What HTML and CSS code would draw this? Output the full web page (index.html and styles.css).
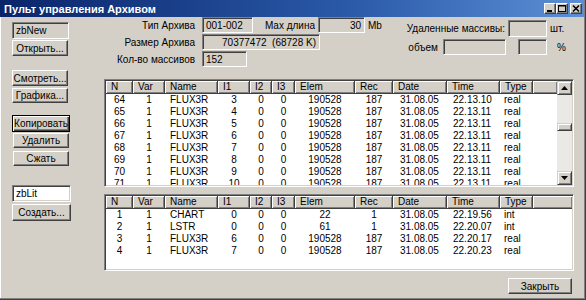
FILE: index.html
```html
<!DOCTYPE html>
<html>
<head>
<meta charset="utf-8">
<link rel="stylesheet" href="styles.css">
</head>
<body>
<div class="window">
  <div class="titlebar">
    <span class="title">Пульт управления Архивом</span>
    <div class="caption-btns">
      <span class="cbtn"><svg width="10" height="9" viewBox="0 0 10 9"><rect x="2" y="6" width="5" height="2" fill="#000"/></svg></span>
      <span class="cbtn"><svg width="10" height="9" viewBox="0 0 10 9"><rect x="1.5" y="1.5" width="7" height="6" fill="none" stroke="#000"/><rect x="1" y="1" width="8" height="1.5" fill="#000"/></svg></span>
      <span class="cbtn cclose"><svg width="10" height="9" viewBox="0 0 10 9"><path d="M2 1.5 L8 7.5 M8 1.5 L2 7.5" stroke="#000" stroke-width="1.6"/></svg></span>
    </div>
  </div>
  <div class="content">
    <div class="side">
      <div class="field gray s-new">zbNew</div>
      <div class="btn s-open">Открыть...</div>
      <div class="btn s-view">Смотреть...</div>
      <div class="btn s-graph">Графика...</div>
      <div class="btn focus s-copy">Копировать</div>
      <div class="btn s-del">Удалить</div>
      <div class="btn s-pack">Сжать</div>
      <div class="field white s-lit">zbLit</div>
      <div class="btn s-create">Создать...</div>
    </div>
    <div class="main">
      <div class="form">
        <div class="form-left">
          <div class="frow">
            <span class="lbl lbl-main">Тип Архива</span>
            <span class="field gray f-type">001-002</span>
            <span class="lbl lbl-max">Max длина</span>
            <span class="field gray f-max">30</span>
            <span class="unit">Mb</span>
          </div>
          <div class="frow">
            <span class="lbl lbl-main">Размер Архива</span>
            <span class="field gray f-size">70377472&nbsp; (68728 K)</span>
          </div>
          <div class="frow">
            <span class="lbl lbl-main">Кол-во массивов</span>
            <span class="field gray f-count">152</span>
          </div>
        </div>
        <div class="form-right">
          <div class="rrow rrow-a">
            <span class="lbl lbl-del">Удаленные массивы:</span>
            <span class="field gray f-del"></span>
            <span class="unit">шт.</span>
          </div>
          <div class="rrow rrow-b">
            <span class="lbl lbl-vol">объем</span>
            <span class="field gray f-vol"></span>
            <span class="field gray f-pct"></span>
            <span class="unit u-pct">%</span>
          </div>
        </div>
      </div>

      <div class="list list-top">
        <div class="list-main">
          <div class="row head">
            <span>N</span><span>Var</span><span>Name</span><span>I1</span><span>I2</span><span>I3</span><span>Elem</span><span>Rec</span><span>Date</span><span>Time</span><span>Type</span><span></span>
          </div>
          <div class="row"><span class="c">64</span><span class="c">1</span><span class="l">FLUX3R</span><span class="c">3</span><span class="c">0</span><span class="c">0</span><span class="c">190528</span><span class="c">187</span><span class="l">31.08.05</span><span class="l">22.13.10</span><span class="l">real</span><span></span></div>
          <div class="row"><span class="c">65</span><span class="c">1</span><span class="l">FLUX3R</span><span class="c">4</span><span class="c">0</span><span class="c">0</span><span class="c">190528</span><span class="c">187</span><span class="l">31.08.05</span><span class="l">22.13.11</span><span class="l">real</span><span></span></div>
          <div class="row"><span class="c">66</span><span class="c">1</span><span class="l">FLUX3R</span><span class="c">5</span><span class="c">0</span><span class="c">0</span><span class="c">190528</span><span class="c">187</span><span class="l">31.08.05</span><span class="l">22.13.11</span><span class="l">real</span><span></span></div>
          <div class="row"><span class="c">67</span><span class="c">1</span><span class="l">FLUX3R</span><span class="c">6</span><span class="c">0</span><span class="c">0</span><span class="c">190528</span><span class="c">187</span><span class="l">31.08.05</span><span class="l">22.13.11</span><span class="l">real</span><span></span></div>
          <div class="row"><span class="c">68</span><span class="c">1</span><span class="l">FLUX3R</span><span class="c">7</span><span class="c">0</span><span class="c">0</span><span class="c">190528</span><span class="c">187</span><span class="l">31.08.05</span><span class="l">22.13.11</span><span class="l">real</span><span></span></div>
          <div class="row"><span class="c">69</span><span class="c">1</span><span class="l">FLUX3R</span><span class="c">8</span><span class="c">0</span><span class="c">0</span><span class="c">190528</span><span class="c">187</span><span class="l">31.08.05</span><span class="l">22.13.11</span><span class="l">real</span><span></span></div>
          <div class="row"><span class="c">70</span><span class="c">1</span><span class="l">FLUX3R</span><span class="c">9</span><span class="c">0</span><span class="c">0</span><span class="c">190528</span><span class="c">187</span><span class="l">31.08.05</span><span class="l">22.13.11</span><span class="l">real</span><span></span></div>
          <div class="row"><span class="c">71</span><span class="c">1</span><span class="l">FLUX3R</span><span class="c">10</span><span class="c">0</span><span class="c">0</span><span class="c">190528</span><span class="c">187</span><span class="l">31.08.05</span><span class="l">22.13.11</span><span class="l">real</span><span></span></div>
        </div>
        <div class="vscroll">
          <span class="sbtn"><svg width="7" height="4" viewBox="0 0 7 4"><path d="M3.5 0 L7 4 L0 4 Z" fill="#000"/></svg></span>
          <div class="track">
            <span class="thumb"></span>
          </div>
          <span class="sbtn"><svg width="7" height="4" viewBox="0 0 7 4"><path d="M0 0 L7 0 L3.5 4 Z" fill="#000"/></svg></span>
        </div>
      </div>

      <div class="list list-bottom">
        <div class="list-main">
          <div class="row head">
            <span>N</span><span>Var</span><span>Name</span><span>I1</span><span>I2</span><span>I3</span><span>Elem</span><span>Rec</span><span>Date</span><span>Time</span><span>Type</span><span></span>
          </div>
          <div class="row"><span class="c">1</span><span class="c">1</span><span class="l">CHART</span><span class="c">0</span><span class="c">0</span><span class="c">0</span><span class="c">22</span><span class="c">1</span><span class="l">31.08.05</span><span class="l">22.19.56</span><span class="l">int</span><span></span></div>
          <div class="row"><span class="c">2</span><span class="c">1</span><span class="l">LSTR</span><span class="c">0</span><span class="c">0</span><span class="c">0</span><span class="c">61</span><span class="c">1</span><span class="l">31.08.05</span><span class="l">22.20.07</span><span class="l">int</span><span></span></div>
          <div class="row"><span class="c">3</span><span class="c">1</span><span class="l">FLUX3R</span><span class="c">6</span><span class="c">0</span><span class="c">0</span><span class="c">190528</span><span class="c">187</span><span class="l">31.08.05</span><span class="l">22.20.17</span><span class="l">real</span><span></span></div>
          <div class="row"><span class="c">4</span><span class="c">1</span><span class="l">FLUX3R</span><span class="c">7</span><span class="c">0</span><span class="c">0</span><span class="c">190528</span><span class="c">187</span><span class="l">31.08.05</span><span class="l">22.20.23</span><span class="l">real</span><span></span></div>
        </div>
      </div>

      <div class="footer">
        <div class="btn b-close">Закрыть</div>
      </div>
    </div>
  </div>
</div>
</body>
</html>
```

FILE: styles.css
```css
* { box-sizing: border-box; }
html, body { margin: 0; padding: 0; background: #d4d0c8; }
body {
  font-family: "Liberation Sans", Arial, sans-serif;
  font-size: 10px;
  color: #000;
}
.window {
  width: 586px;
  height: 300px;
  background: #d4d0c8;
  border-right: 1px solid #404040;
  border-bottom: 1px solid #404040;
  box-shadow: inset -1px -1px #808080, inset 1px 0 #ffffff;
  overflow: hidden;
}
.titlebar {
  height: 17px;
  display: flex;
  align-items: center;
  padding-left: 4px;
  margin-right: 1px;
  background: linear-gradient(to right, #0a246a 0%, #2a5aa8 60%, #5d8fd6 100%);
  color: #fff;
}
.title {
  font-weight: bold;
  font-size: 11px;
}
.caption-btns {
  margin-left: auto;
  display: flex;
  padding-right: 2px;
}
.cbtn {
  width: 12px;
  height: 11px;
  background: #d4d0c8;
  border: 1px solid;
  border-color: #fff #404040 #404040 #fff;
  box-shadow: inset -1px -1px #808080;
  display: flex;
  align-items: center;
  justify-content: center;
}
.cbtn svg { display: block; }
.cclose { margin-left: 2px; }

.content { display: flex; }

/* generic controls */
.field {
  display: flex;
  align-items: center;
  border: 1px solid;
  border-color: #808080 #fff #fff #808080;
  box-shadow: inset 1px 1px #404040, inset -1px -1px #d4d0c8;
  padding: 0 3px;
  white-space: nowrap;
}
.field.gray { background: #d4d0c8; }
.field.white { background: #fff; }
.btn {
  display: flex;
  align-items: center;
  justify-content: center;
  background: #d4d0c8;
  border: 1px solid;
  border-color: #fff #404040 #404040 #fff;
  box-shadow: inset -1px -1px #808080;
  white-space: nowrap;
}
.btn.focus {
  border: 1px solid #000;
  box-shadow: inset 1px 1px #fff, inset -1px -1px #404040, inset -2px -2px #808080;
}

/* left side */
.side {
  width: 71px;
  padding-left: 12px;
  display: flex;
  flex-direction: column;
}
.s-new { margin-top: 5px; height: 17px; width: 57px; }
.s-open { margin-top: 1px; height: 16px; width: 56px; }
.s-view { margin-top: 14px; height: 16px; width: 56px; }
.s-graph { margin-top: 2px; height: 15px; width: 56px; }
.s-copy { margin-top: 12px; height: 17px; width: 58px; }
.s-del { margin-top: 1px; height: 15px; width: 56px; margin-left: 1px; }
.s-pack { margin-top: 3px; height: 15px; width: 56px; margin-left: 1px; }
.s-lit { margin-top: 19px; height: 17px; width: 59px; }
.s-create { margin-top: 2px; height: 17px; width: 59px; }

/* main */
.main {
  margin-left: 33px;
  width: 470px;
  display: flex;
  flex-direction: column;
}
.form {
  height: 56px;
  display: flex;
}
.form-left {
  width: 296px;
  display: flex;
  flex-direction: column;
  gap: 1px;
}
.frow {
  height: 16px;
  display: flex;
  align-items: stretch;
}
.lbl {
  display: flex;
  align-items: center;
  justify-content: flex-end;
  white-space: nowrap;
}
.lbl-main { width: 91px; margin-right: 7px; }
.lbl-max { width: 48px; margin-left: 14px; }
.unit { display: flex; align-items: center; margin-left: 3px; }
.f-type { width: 51px; }
.f-max { width: 47px; margin-left: 3px; justify-content: flex-end; }
.f-size { width: 118px; justify-content: flex-end; }
.f-count { width: 45px; }

.form-right {
  flex: 1;
  padding-top: 3px;
  display: flex;
  flex-direction: column;
}
.rrow { display: flex; align-items: stretch; }
.rrow-a { height: 17px; }
.rrow-b { height: 16px; margin-top: 2px; }
.lbl-del { width: 105px; }
.f-del { width: 39px; margin-left: 3px; }
.lbl-vol { width: 38px; }
.f-vol { width: 63px; margin-left: 5px; }
.f-pct { width: 29px; margin-left: 12px; }
.u-pct { margin-left: 10px; }

/* lists */
.list {
  display: flex;
  background: #fff;
  border: 1px solid;
  border-color: #808080 #fff #fff #808080;
  box-shadow: inset 1px 1px #404040, inset -1px -1px #d4d0c8;
  padding: 1px 1px 1px 1px;
  overflow: hidden;
}
.list-top { height: 108px; margin-top: 6px; }
.list-bottom { height: 77px; margin-top: 7px; }
.list-main { flex: 1; overflow: hidden; }
.row {
  display: grid;
  grid-template-columns: 27px 32px 53px 32px 22px 23px 60px 38px 54px 53px 33px 1fr;
  height: 12px;
  line-height: 12px;
  white-space: nowrap;
}
.row span { overflow: hidden; }
.row .c { text-align: center; }
.row .l { padding-left: 5px; }
.row .l:nth-child(9) { padding-left: 7px; }
.row .l:nth-child(10) { padding-left: 6px; }
.row .l:nth-child(11) { padding-left: 4px; }
.row.head {
  height: 13px;
  line-height: 11px;
}
.row.head span {
  background: #d4d0c8;
  border-right: 1px solid #404040;
  border-bottom: 1px solid #404040;
  box-shadow: inset 1px 1px #fff, inset -1px -1px #808080;
  padding-left: 5px;
}
.row.head span:last-child { border-right: none; }

.vscroll {
  width: 15px;
  display: flex;
  flex-direction: column;
}
.sbtn {
  height: 14px;
  background: #d4d0c8;
  border: 1px solid;
  border-color: #d4d0c8 #404040 #404040 #d4d0c8;
  box-shadow: inset 1px 1px #fff, inset -1px -1px #808080;
  display: flex;
  align-items: center;
  justify-content: center;
}
.sbtn svg { display: block; }
.track {
  flex: 1;
  background: #ebe9e5;
  padding-top: 28px;
}
.thumb {
  display: block;
  height: 8px;
  background: #d4d0c8;
  border: 1px solid;
  border-color: #d4d0c8 #404040 #404040 #d4d0c8;
  box-shadow: inset 1px 1px #fff, inset -1px -1px #808080;
}

.footer {
  display: flex;
  justify-content: flex-end;
  margin-top: 7px;
  padding-right: 2px;
}
.b-close { width: 64px; height: 16px; }
```
